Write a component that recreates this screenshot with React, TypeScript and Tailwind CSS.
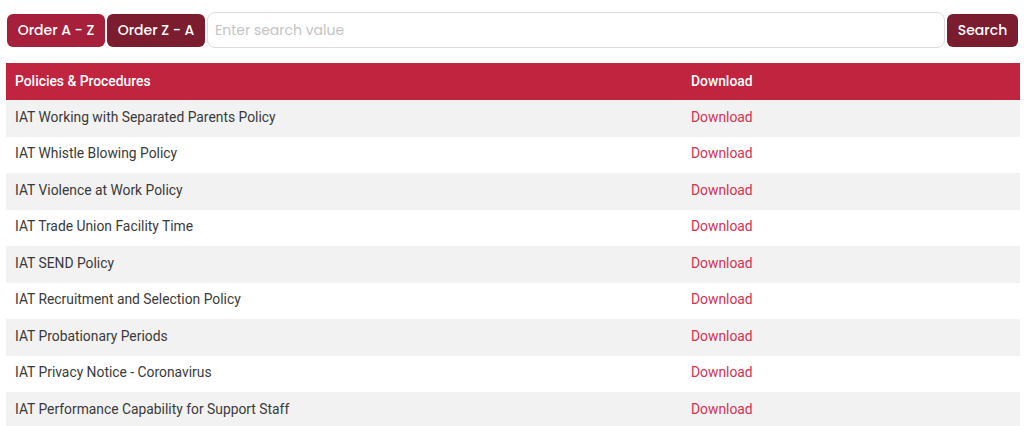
const POLICIES = [
  "IAT Working with Separated Parents Policy",
  "IAT Whistle Blowing Policy",
  "IAT Violence at Work Policy",
  "IAT Trade Union Facility Time",
  "IAT SEND Policy",
  "IAT Recruitment and Selection Policy",
  "IAT Probationary Periods",
  "IAT Privacy Notice - Coronavirus",
  "IAT Performance Capability for Support Staff",
  "IAT Pay Policy",
];

const heading = { fontFamily: "Poppins, Inter, 'Noto Sans', sans-serif" };

export default function App() {
  return (
    <div className="h-[426px] overflow-hidden bg-white px-[6px] pt-[12px]" style={{ fontFamily: "Roboto, 'Noto Sans', sans-serif" }}>
      <div className="flex items-center gap-[2px] pl-[1px]">
        <button className="h-[33px] w-[98px] rounded-[6px] bg-[#a6203c] text-[14px] font-medium text-white" style={heading}>
          Order A - Z
        </button>
        <button className="h-[33px] w-[98px] rounded-[6px] bg-[#7b1c2f] text-[14px] font-medium text-white" style={heading}>
          Order Z - A
        </button>
        <input
          className="h-[36px] flex-1 rounded-[8px] border border-[#dcdcdc] px-[7px] text-[14px] text-[#333] outline-none placeholder:text-[#c4c4c4]"
          style={heading}
          placeholder="Enter search value"
        />
        <button className="h-[33px] w-[71px] rounded-[6px] bg-[#7b1c2f] text-[14px] font-medium text-white" style={heading}>
          Search
        </button>
      </div>
      <table className="mt-[15px] w-[1014px] border-collapse text-[13.85px]">
        <thead>
          <tr className="h-[37px] bg-[#c1243f] text-left text-white">
            <th className="w-[675px] pl-[9px] pr-[10px] font-medium">Policies &amp; Procedures</th>
            <th className="px-[10px] font-medium">Download</th>
          </tr>
        </thead>
        <tbody>
          {POLICIES.map((name, i) => (
            <tr key={name} className={`h-[36.5px] ${i % 2 === 0 ? "bg-[#f2f2f2]" : "bg-white"}`}>
              <td className="pl-[9px] pr-[10px] pb-[2px] text-[#3a3a3a]">{name}</td>
              <td className="px-[10px] pb-[2px] text-[#d23352]">Download</td>
            </tr>
          ))}
        </tbody>
      </table>
    </div>
  );
}
